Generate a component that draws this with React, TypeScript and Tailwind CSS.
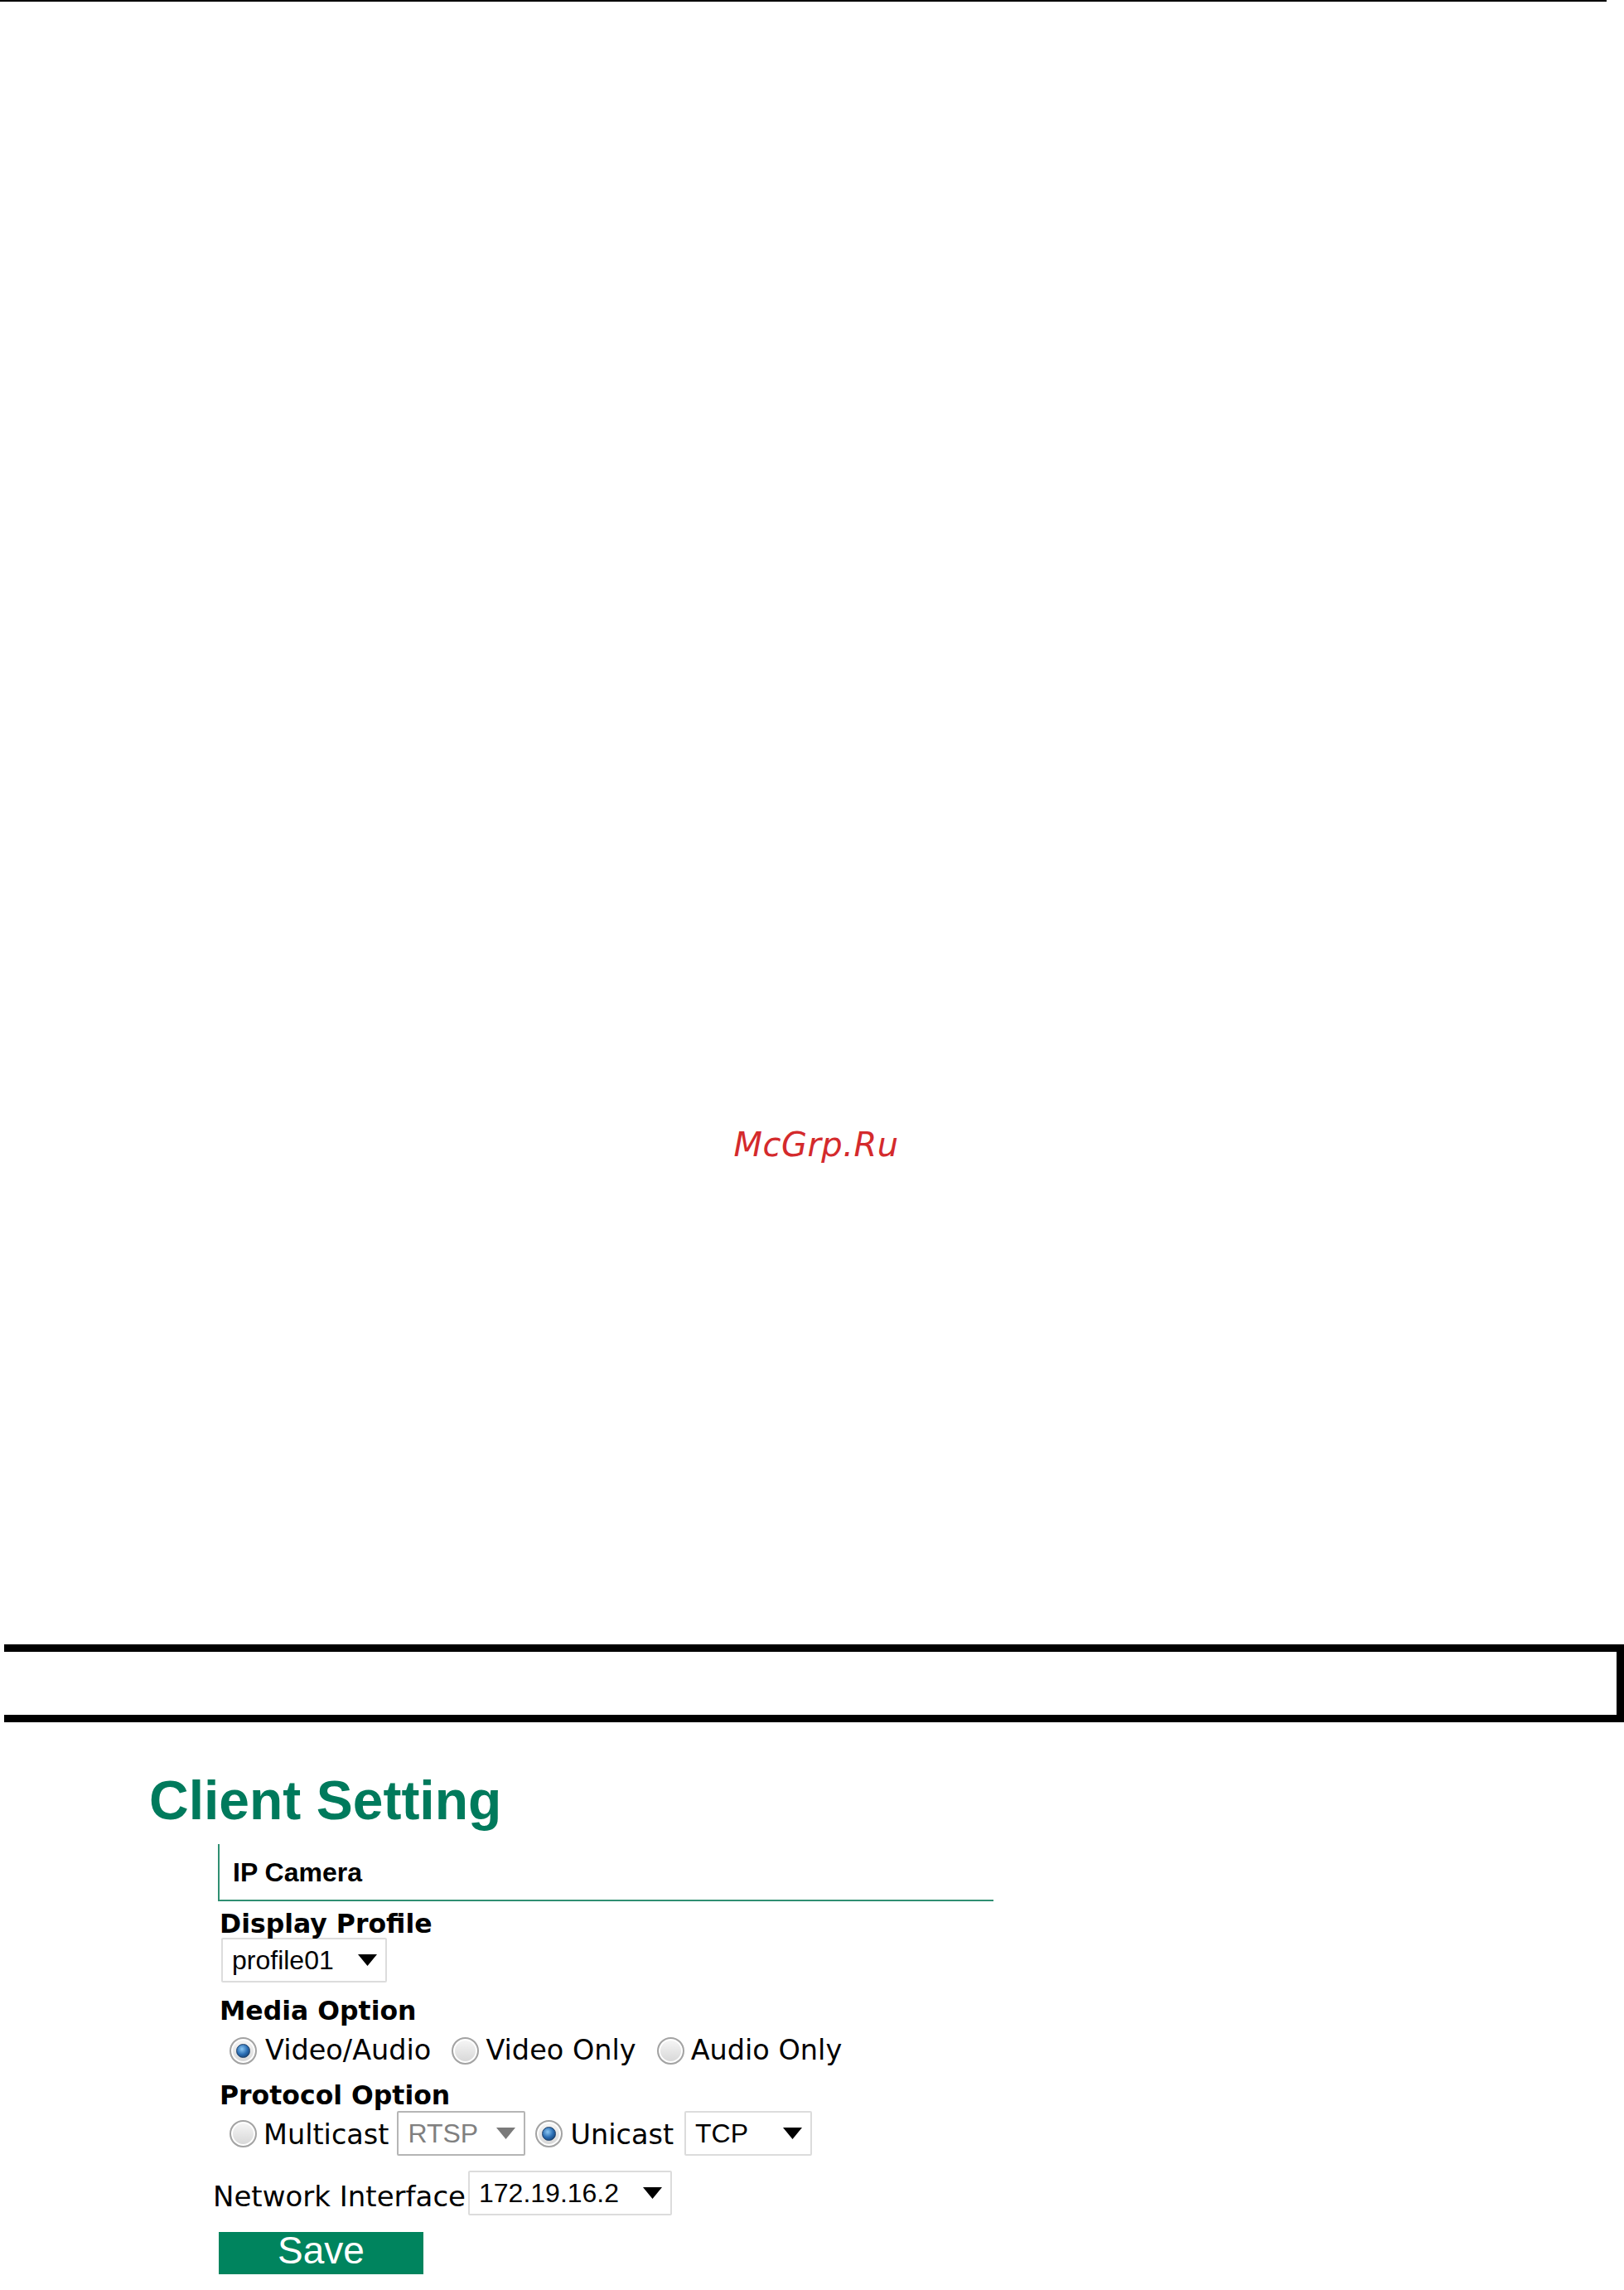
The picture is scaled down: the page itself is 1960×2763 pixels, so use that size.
import React from 'react';

const verdana = { fontFamily: '"DejaVu Sans", Verdana, sans-serif' };
const arial = { fontFamily: '"Liberation Sans", Arial, sans-serif' };

function Radio({ checked }: { checked?: boolean }) {
  return (
    <span className="flex h-[33px] w-[33px] shrink-0 items-center justify-center rounded-full border-2 border-[#a3a3a3] bg-linear-to-b from-[#f7f7f7] to-[#d6d6d6] shadow-[inset_0_0_0_2px_#ffffff]">
      {checked && (
        <span className="h-[17px] w-[17px] rounded-full border border-[#1b3d66] bg-[radial-gradient(circle_at_40%_35%,#8cc8f4,#2a6db3_50%,#0e2f57)]" />
      )}
    </span>
  );
}

function Arrow({ gray }: { gray?: boolean }) {
  return (
    <svg width="23" height="14" viewBox="0 0 23 14" className="shrink-0">
      <path d="M0 0 H23 L11.5 14 Z" fill={gray ? '#7a7a7a' : '#000000'} />
    </svg>
  );
}

function Select({
  value,
  width,
  disabled,
}: {
  value: string;
  width: string;
  disabled?: boolean;
}) {
  return (
    <div
      className={`flex h-[54px] ${width} shrink-0 items-center justify-between rounded-[2px] border-2 bg-white pl-[11px] pr-[10px] ${
        disabled ? 'border-[#b5b5b5] text-[#808080]' : 'border-[#dcdcdc] text-black'
      }`}
    >
      <span className="text-[32px] leading-none" style={arial}>
        {value}
      </span>
      <Arrow gray={disabled} />
    </div>
  );
}

export default function App() {
  return (
    <div className="min-h-[2763px] w-[1960px] bg-white">
      {/* page rule */}
      <div className="h-[2px] w-[1939px] bg-black" />

      {/* watermark */}
      <div className="mt-[1359px] flex justify-center pl-[10px]">
        <span className="text-[40px] italic leading-[40px] tracking-[0.5px] text-[#d42a2c]" style={verdana}>
          McGrp.Ru
        </span>
      </div>

      {/* empty framed bar */}
      <div className="ml-[5px] mt-[583px] h-[94px] w-[1955px] border-y-[9px] border-r-[9px] border-black" />

      {/* screenshot */}
      <div className="pl-[180px] pt-[62px]">
        <h1 className="text-[66px] font-bold leading-[64px] text-[#007a5c]" style={arial}>
          Client Setting
        </h1>

        <div className="ml-[83px] mt-[21px] w-[936px]">
          <div className="border-b-2 border-l-2 border-[#2f8f72] pb-[16px] pl-[16px] pt-[19px]">
            <span className="text-[32px] font-bold leading-[30px] text-black" style={arial}>
              IP Camera
            </span>
          </div>

          <div className="mt-[12px] pl-[2px] text-[31.5px] font-bold leading-[30px] text-black" style={verdana}>
            Display Profile
          </div>
          <div className="mt-[2px] pl-[4px]">
            <Select value="profile01" width="w-[200px]" />
          </div>

          <div className="mt-[19px] pl-[2px] text-[31.5px] font-bold leading-[30px] text-black" style={verdana}>
            Media Option
          </div>
          <div className="mt-[13px] flex h-[40px] items-center pl-[14px] text-[33.5px] leading-[40px] text-black" style={verdana}>
            <Radio checked />
            <span className="ml-[10px]">Video/Audio</span>
            <span className="ml-[25px]">
              <Radio />
            </span>
            <span className="ml-[8px]">Video Only</span>
            <span className="ml-[25px]">
              <Radio />
            </span>
            <span className="ml-[8px]">Audio Only</span>
          </div>

          <div className="mt-[19px] pl-[2px] text-[31.5px] font-bold leading-[30px] text-black" style={verdana}>
            Protocol Option
          </div>
          <div className="mt-[4px] flex items-center pl-[14px] text-[33.5px] text-black" style={verdana}>
            <Radio />
            <span className="ml-[8px] pt-[4px]">Multicast</span>
            <span className="ml-[10px]">
              <Select value="RTSP" width="w-[155px]" disabled />
            </span>
            <span className="ml-[12px]">
              <Radio checked />
            </span>
            <span className="ml-[9px] pt-[4px]">Unicast</span>
            <span className="ml-[13px]">
              <Select value="TCP" width="w-[154px]" />
            </span>
          </div>

          <div className="-ml-[6px] mt-[14px] flex items-center">
            <span className="pt-[10px] text-[34px] text-black" style={verdana}>
              Network Interface
            </span>
            <span className="ml-[3px]">
              <Select value="172.19.16.2" width="w-[246px]" />
            </span>
          </div>

          <div className="ml-[1px] mt-[17px] flex h-[51px] w-[247px] items-center justify-center bg-[#00845e] pb-[8px]">
            <span className="text-[46px] leading-none text-white" style={arial}>
              Save
            </span>
          </div>
        </div>
      </div>
    </div>
  );
}
